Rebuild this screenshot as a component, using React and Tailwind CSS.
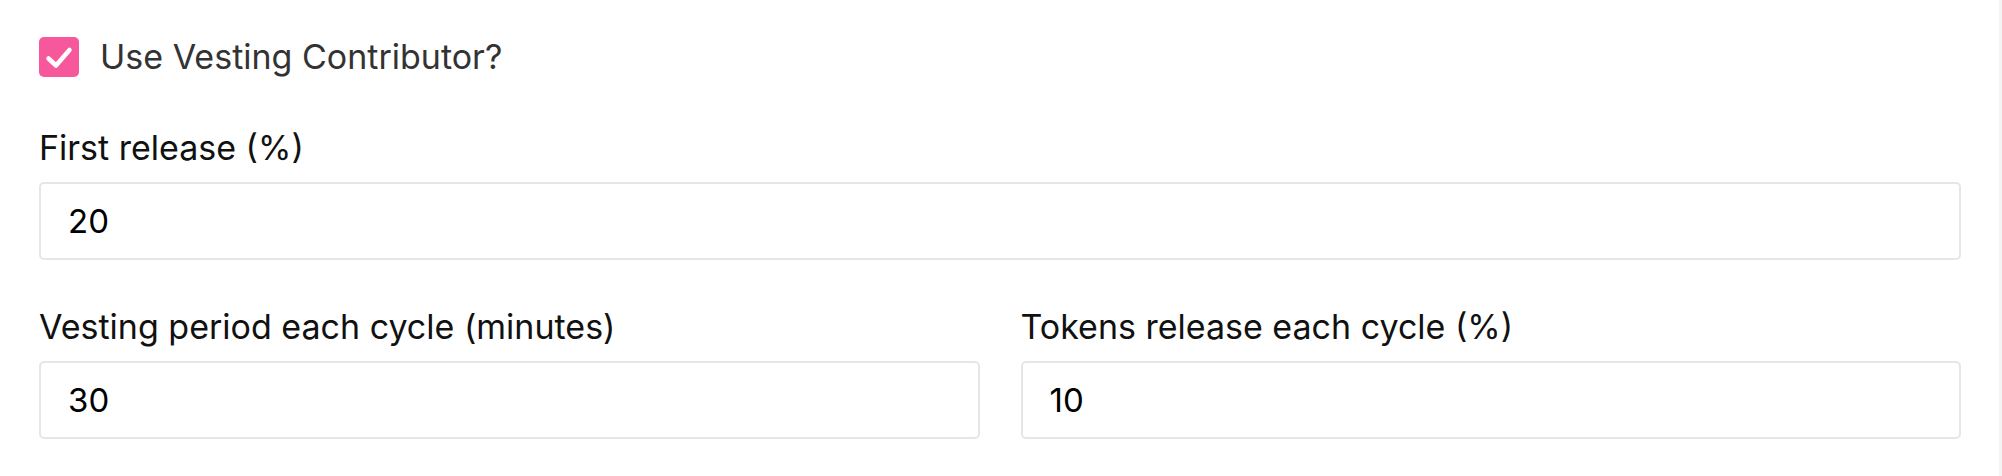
const Field = ({ label, value }) => (
  <div className="flex flex-col">
    <label className="text-[34px] leading-10 text-[#111]">{label}</label>
    <input
      readOnly
      value={value}
      className="mt-[14px] h-[78px] w-full rounded-[5px] border-2 border-[#e6e6e6] bg-white px-[27px] text-[33px] text-black outline-none"
    />
  </div>
);

const App = () => {
  return (
    <div
      className="flex h-[476px] w-full bg-white"
      style={{ fontFamily: "Inter, 'Noto Sans', sans-serif" }}
    >
      <div className="flex-1 pl-[39px] pr-[38px] pt-[37px]">
        {/* Vesting toggle */}
        <div className="flex items-center gap-[21px]">
          <div className="h-10 w-10 rounded-[5px] bg-[#f7579b]">
            <svg viewBox="0 0 40 40" className="h-10 w-10">
              <path
                d="M9.5 21.5 17 28.5 30.5 13"
                fill="none"
                stroke="white"
                strokeWidth="4.5"
                strokeLinecap="round"
                strokeLinejoin="round"
              />
            </svg>
          </div>
          <span className="text-[34px] leading-10 text-[#333]">Use Vesting Contributor?</span>
        </div>

        <div className="mt-[51px]">
          <Field label="First release (%)" value="20" />
        </div>

        <div className="mt-[47px] grid grid-cols-2 gap-[41px]">
          <Field label="Vesting period each cycle (minutes)" value="30" />
          <Field label="Tokens release each cycle (%)" value="10" />
        </div>
      </div>
      <div className="w-[3px] bg-[#f4f4f4]"></div>
    </div>
  );
};

export default App;
